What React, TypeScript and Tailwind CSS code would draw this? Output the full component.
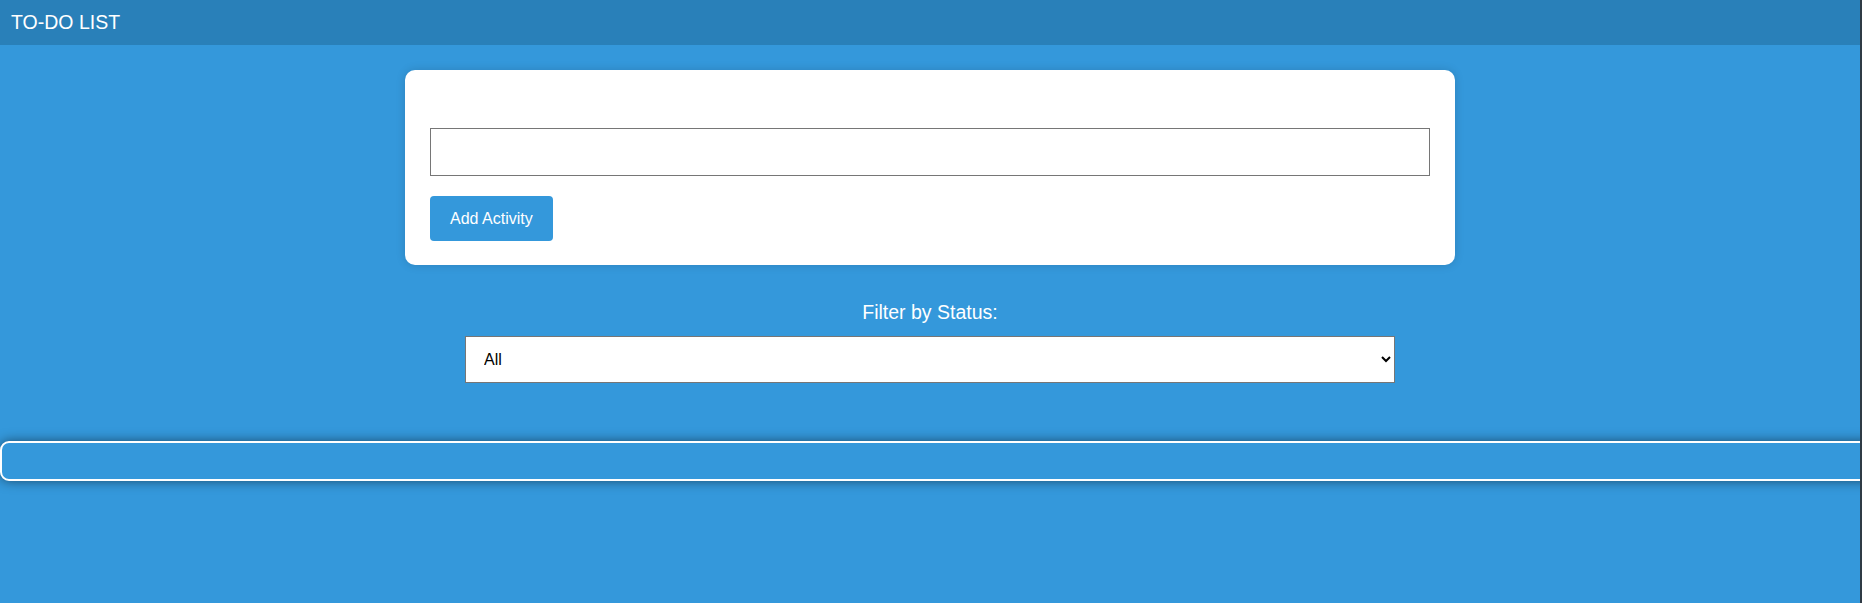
import React from "react";

export default function App() {
  return (
    <div
      className="relative flex min-h-[603px] w-full overflow-hidden bg-[#3498db]"
      style={{ fontFamily: '"Liberation Sans", Arial, sans-serif' }}
    >
      <div className="min-w-0 flex-1">
        <header className="flex h-[45px] items-center bg-[#2980b9] px-[11px] text-[19.5px] text-white">
          TO-DO LIST
        </header>

        <div className="mx-auto mt-[25px] w-[1050px] rounded-[10px] bg-white px-[25px] pt-[58px] pb-[24px] shadow-[0_0_10px_rgba(0,0,0,0.15)]">
          <input
            type="text"
            className="block h-[48px] w-full border border-[#767676] bg-white px-2 text-[16px] text-black outline-none"
          />
          <button className="mt-[20px] h-[45px] rounded-[4px] bg-[#3498db] px-[20px] text-[16px] text-white">
            Add Activity
          </button>
        </div>

        <div className="mt-[36px] text-center text-[19.5px] leading-[23px] text-white">
          Filter by Status:
        </div>
        <div className="mt-[12px] flex justify-center">
          <select className="box-border h-[47px] w-1/2 border border-[#767676] bg-white pl-[14px] pr-[6px] text-[16px] text-black outline-none">
            <option>All</option>
            <option>Completed</option>
            <option>Pending</option>
          </select>
        </div>

        <div className="mt-[58px] h-[40px] w-[calc(100%+20px)] rounded-[9px] border-2 border-white bg-[#3498db] shadow-[0_0_12px_rgba(0,0,0,0.5)]" />
      </div>

      <div className="w-[2px] shrink-0 bg-[#2f3b45]" />
    </div>
  );
}
